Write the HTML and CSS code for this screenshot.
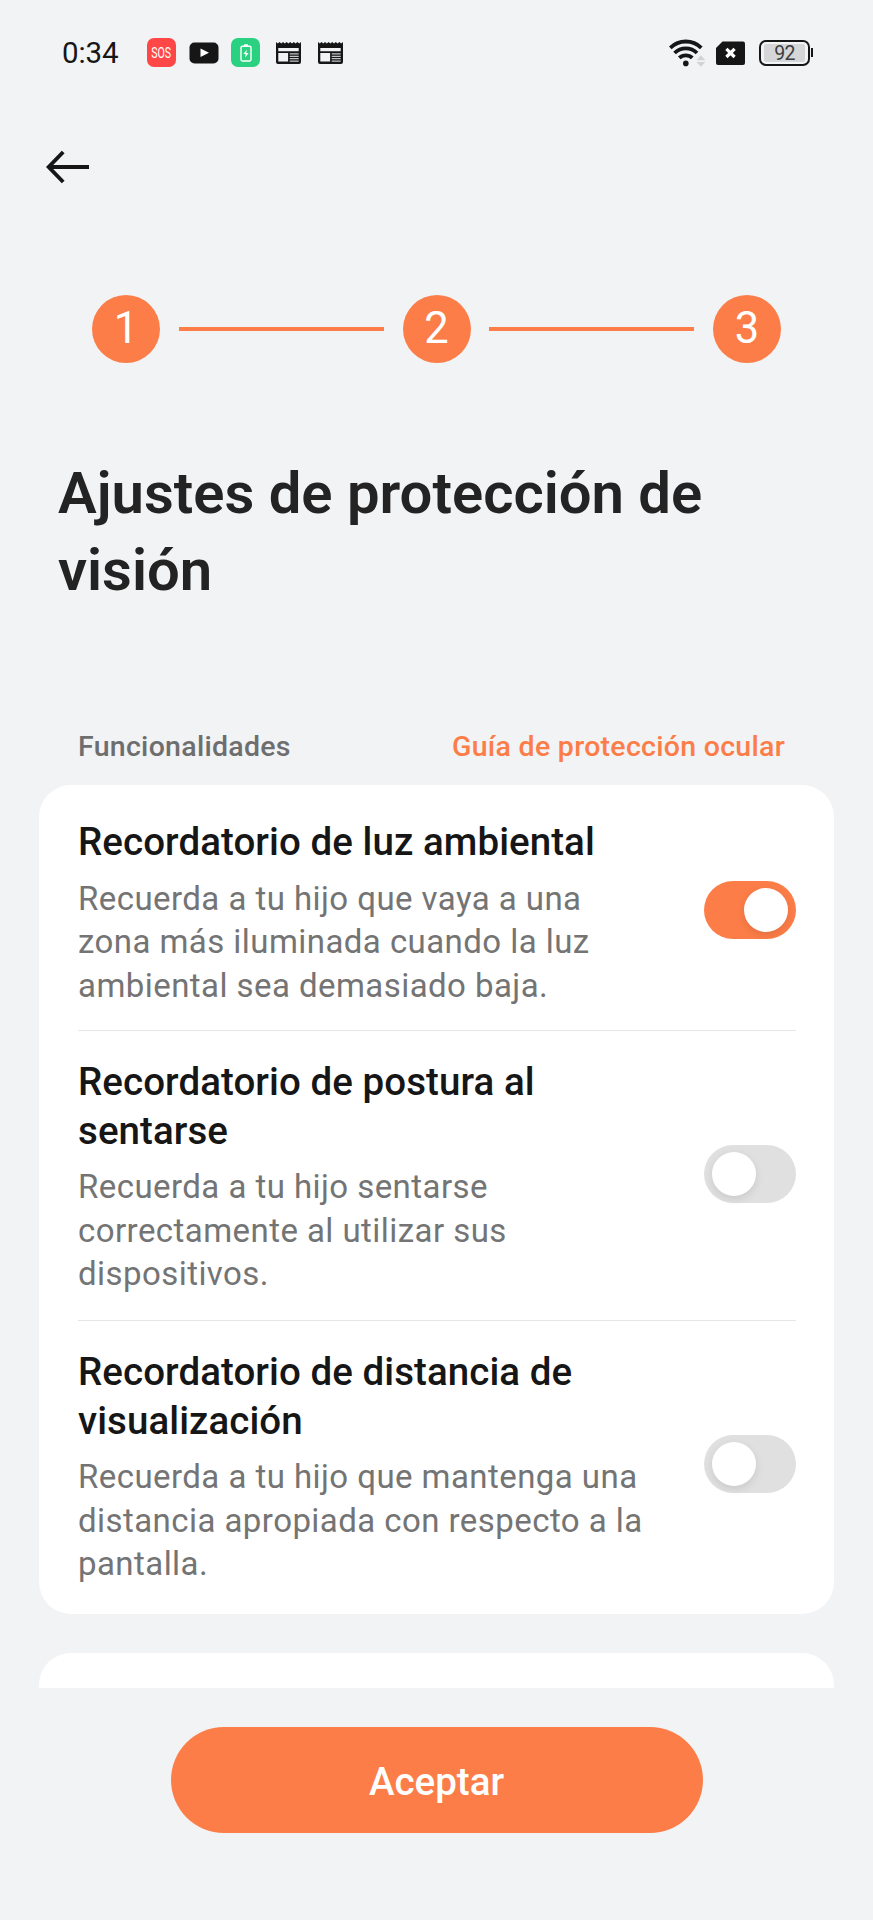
FILE: index.html
```html
<!DOCTYPE html>
<html lang="es">
<head>
    <meta charset="UTF-8">
    <meta name="viewport" content="width=device-width, initial-scale=1.0">
    <title>Ajustes de protección de visión</title>
    <link rel="stylesheet" href="styles.css">
</head>
<body>

<div class="screen">
    <div class="status-bar">
        <span class="time">0:34</span>
        <div class="status-left">
            <span class="app-icon sos"><span class="sos-text">SOS</span></span>
            <svg class="icon-video" width="30" height="22" viewBox="0 0 30 22">
                <rect x="0.5" y="0.5" width="29" height="21" rx="5" fill="#161616"/>
                <path d="M11.5 6.5v8.5l8.5-4.2z" fill="#fff"/>
            </svg>
            <span class="app-icon charge">
                <svg width="12" height="18" viewBox="0 0 12 18">
                    <rect x="1" y="2.2" width="10" height="14.8" rx="1.4" fill="none" stroke="#fff" stroke-width="1.4"/>
                    <path d="M4 0.3h4v1.9h-4z" fill="#fff"/>
                    <path d="M6.9 5.5L3.4 10h2.2l-.6 3.8 3.6-4.9H6.3z" fill="#fff"/>
                </svg>
            </span>
            <svg class="icon-news" width="25" height="22" viewBox="0 0 25 22">
                <path d="M0 0l1.8 1.4L3.5 0l1.8 1.4L7 0l1.8 1.4L10.6 0l1.8 1.4L14.2 0 16 1.4 17.8 0l1.8 1.4L21.4 0l1.8 1.4L25 0v20a2 2 0 0 1-2 2H2a2 2 0 0 1-2-2z" fill="#161616"/>
                <path d="M2.3 6h20.4v3.2H2.3zM2.3 11h9.8v8.6H2.3z" fill="#f2f3f5"/>
                <path d="M13.7 11.2h9v1.3h-9zM13.7 13.7h9V15h-9zM13.7 16h9v1.2h-9zM13.7 18.4h9v1.3h-9z" fill="#c4c7c8"/>
            </svg>
            <svg class="icon-news" width="25" height="22" viewBox="0 0 25 22">
                <path d="M0 0l1.8 1.4L3.5 0l1.8 1.4L7 0l1.8 1.4L10.6 0l1.8 1.4L14.2 0 16 1.4 17.8 0l1.8 1.4L21.4 0l1.8 1.4L25 0v20a2 2 0 0 1-2 2H2a2 2 0 0 1-2-2z" fill="#161616"/>
                <path d="M2.3 6h20.4v3.2H2.3zM2.3 11h9.8v8.6H2.3z" fill="#f2f3f5"/>
                <path d="M13.7 11.2h9v1.3h-9zM13.7 13.7h9V15h-9zM13.7 16h9v1.2h-9zM13.7 18.4h9v1.3h-9z" fill="#c4c7c8"/>
            </svg>
        </div>
        <div class="status-right">
            <svg width="37" height="28" viewBox="0 0 37 28">
                <g fill="none" stroke="#161616" stroke-width="3.8">
                    <path d="M1.3 8.9a22 22 0 0 1 31 0"/>
                    <path d="M5.6 14a15.7 15.7 0 0 1 22.4 0"/>
                    <path d="M10.3 18.9a9.4 9.4 0 0 1 13 0"/>
                </g>
                <circle cx="16.8" cy="24.4" r="2.8" fill="#161616"/>
                <path d="M27.5 21.3l4.4-5 4.4 5zM27.5 23l4.4 4.8 4.4-4.8z" fill="#d2d3d5"/>
            </svg>
            <svg class="icon-sim" width="29" height="24" viewBox="0 0 29 24">
                <path d="M6.5 0.5H27a2 2 0 0 1 2 2V22a2 2 0 0 1-2 2H2a2 2 0 0 1-2-2V7z" fill="#161616"/>
                <path d="M10.4 7.8l8.2 8.2M18.6 7.8l-8.2 8.2" stroke="#fff" stroke-width="3.2"/>
            </svg>
            <div class="battery"><span class="battery-level">92</span></div>
            <span class="battery-tip"></span>
        </div>
    </div>

    <div class="nav">
        <svg width="44" height="34" viewBox="0 0 44 34">
            <path d="M17.2 2L2.7 17l14.5 15M2.5 17H43" fill="none" stroke="#161616" stroke-width="3.9"/>
        </svg>
    </div>

    <div class="steps">
        <span class="step">1</span>
        <span class="step-line"></span>
        <span class="step">2</span>
        <span class="step-line"></span>
        <span class="step">3</span>
    </div>

    <h1>Ajustes de protección de visión</h1>

    <div class="section-header">
        <span class="section-name">Funcionalidades</span>
        <a class="guide-link">Guía de protección ocular</a>
    </div>

    <div class="list">
        <div class="card">
            <div class="item">
                <div class="item-text">
                    <h2>Recordatorio de luz ambiental</h2>
                    <p>Recuerda a tu hijo que vaya a una<br>zona más iluminada cuando la luz<br>ambiental sea demasiado baja.</p>
                </div>
                <span class="switch on"><span class="knob"></span></span>
            </div>
            <div class="item">
                <div class="item-text">
                    <h2>Recordatorio de postura al<br>sentarse</h2>
                    <p>Recuerda a tu hijo sentarse<br>correctamente al utilizar sus<br>dispositivos.</p>
                </div>
                <span class="switch"><span class="knob"></span></span>
            </div>
            <div class="item">
                <div class="item-text">
                    <h2>Recordatorio de distancia de<br>visualización</h2>
                    <p>Recuerda a tu hijo que mantenga una<br>distancia apropiada con respecto a la<br>pantalla.</p>
                </div>
                <span class="switch"><span class="knob"></span></span>
            </div>
        </div>
        <div class="card next-card"></div>
    </div>

    <div class="footer">
        <button class="accept">Aceptar</button>
    </div>
</div>

</body>
</html>
```
FILE: styles.css
```css
* {
    box-sizing: border-box;
}
body {
    margin: 0;
    background-color: #f2f3f5;
    font-family: Roboto, "Liberation Sans", sans-serif;
    color: #161616;
}
.screen {
    width: 873px;
    height: 1920px;
    display: flex;
    flex-direction: column;
    overflow: hidden;
}
.status-bar {
    height: 105px;
    display: flex;
    align-items: center;
    padding: 0 60px 0 62px;
}
.time {
    width: 85px;
    font-size: 29.5px;
    letter-spacing: -0.1px;
    white-space: nowrap;
}
.status-left {
    display: flex;
    align-items: center;
}
.app-icon {
    width: 29px;
    height: 29px;
    border-radius: 7px;
    display: flex;
    align-items: center;
    justify-content: center;
}
.sos {
    background-color: #ff4747;
    color: #ffffff;
    font-size: 14px;
}
.sos-text {
    transform: scaleX(0.76);
}
.charge {
    background-color: #2ad181;
    margin-left: 12px;
}
.icon-video {
    margin-left: 13px;
}
.icon-news {
    margin-left: 16px;
}
.icon-news + .icon-news {
    margin-left: 17px;
}
.status-right {
    display: flex;
    align-items: center;
    margin-left: auto;
}
.icon-sim {
    margin-left: 10px;
}
.battery {
    width: 51px;
    height: 26px;
    margin-left: 14px;
    padding: 2px 3px;
    border: 2px solid #161616;
    border-radius: 7px;
}
.battery-level {
    display: block;
    width: 41px;
    height: 18px;
    background-color: #d5d6d8;
    border-radius: 2px;
    font-size: 19.5px;
    letter-spacing: -0.6px;
    line-height: 19px;
    text-align: center;
    color: #3c3d3f;
}
.battery-tip {
    width: 2px;
    height: 9px;
    margin-left: 1px;
    background-color: #161616;
}
.nav {
    height: 124px;
    padding: 45px 0 0 46px;
}
.steps {
    display: flex;
    align-items: center;
    justify-content: space-between;
    margin-top: 66px;
    padding: 0 92px;
}
.step {
    width: 68px;
    height: 68px;
    border-radius: 50%;
    background-color: #fc7d48;
    color: #ffffff;
    font-size: 43.5px;
    line-height: 68px;
    text-align: center;
}
.step-line {
    width: 205px;
    height: 4px;
    background-color: #fc7d48;
}
h1 {
    margin: 92px 0 0;
    padding: 0 58px;
    font-size: 58px;
    font-weight: 600;
    line-height: 77px;
    color: #232323;
}
.section-header {
    display: flex;
    justify-content: space-between;
    margin-top: 121px;
    padding: 0 88px 0 78px;
    height: 55px;
    font-size: 28.5px;
    font-weight: 500;
    letter-spacing: 0.28px;
    line-height: 33px;
}
.section-name {
    color: #6e6e6f;
}
.guide-link {
    color: #fc7d48;
}
.list {
    height: 903px;
    padding: 0 39px;
    overflow: hidden;
}
.card {
    background-color: #ffffff;
    border-radius: 32px;
    padding: 0 38px 0 39px;
}
.next-card {
    height: 120px;
    margin-top: 39px;
}
.item {
    display: flex;
    align-items: center;
    justify-content: space-between;
    height: 245px;
    padding: 33px 0 23px;
}
.item + .item {
    height: 290px;
    padding: 27px 0 24px;
    border-top: 1px solid #e6e6e6;
}
.item:last-child {
    height: 294px;
    padding-bottom: 28px;
}
.item-text {
    white-space: nowrap;
}
h2 {
    margin: 0;
    font-size: 38.5px;
    font-weight: 500;
    letter-spacing: 0.07px;
    line-height: 48.4px;
}
p {
    margin: 10.5px 0 0;
    font-size: 33px;
    letter-spacing: 0.44px;
    line-height: 43.5px;
    color: #747474;
}
.switch {
    flex-shrink: 0;
    width: 92px;
    height: 58px;
    margin-bottom: 6px;
    padding: 7px 8px;
    border-radius: 29px;
    background-color: #e0e0e0;
}
.switch.on {
    background-color: #fc7d48;
}
.knob {
    display: block;
    width: 44px;
    height: 44px;
    border-radius: 50%;
    background-color: #ffffff;
    box-shadow: 0 3px 8px rgba(0, 0, 0, 0.1);
}
.on .knob {
    margin-left: auto;
}
.footer {
    display: flex;
    justify-content: center;
    padding-top: 39px;
}
.accept {
    width: 532px;
    height: 106px;
    padding-top: 3px;
    border: none;
    border-radius: 53px;
    background-color: #fc7d48;
    color: #ffffff;
    font-family: inherit;
    font-size: 38.5px;
    font-weight: 500;
    cursor: pointer;
}
```
